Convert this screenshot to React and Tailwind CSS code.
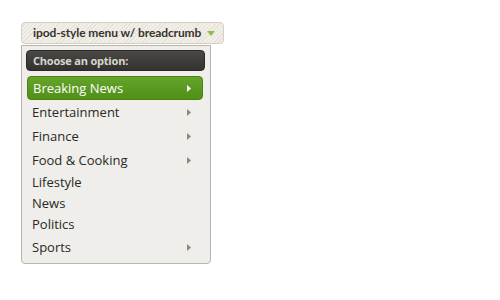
import React from "react";

const items = [
  { label: "Breaking News", arrow: true, active: true },
  { label: "Entertainment", arrow: true },
  { label: "Finance", arrow: true },
  { label: "Food & Cooking", arrow: true },
  { label: "Lifestyle" },
  { label: "News" },
  { label: "Politics" },
  { label: "Sports", arrow: true },
];

function Arrow({ color }) {
  return (
    <svg width="4" height="7" viewBox="0 0 4 7" className="block">
      <path d="M0 0 L4 3.5 L0 7 Z" fill={color} />
    </svg>
  );
}

export default function App() {
  return (
    <div className="w-[500px] h-[300px] bg-white relative font-[family-name:'Open_Sans','Noto_Sans',sans-serif]">
      <div className="pt-[22px] pl-[21px]">
        <div className="w-[203px] h-[22px] flex items-center justify-between pl-[11px] pr-[8px] rounded-[4px] border border-[#d4d0c4] bg-[#eeebe3] bg-[repeating-linear-gradient(135deg,#f2efe8_0px,#f2efe8_2px,#e6e2d8_2px,#e6e2d8_3px)]">
          <span className="text-[12px] font-bold text-[#36342e] leading-none tracking-[-0.1px] whitespace-nowrap font-[family-name:Lato,sans-serif]">
            ipod-style menu w/ breadcrumb
          </span>
          <svg width="8" height="5" viewBox="0 0 8 5" className="block shrink-0">
            <path d="M0 0 L8 0 L4 5 Z" fill="#8dbb50" />
          </svg>
        </div>
        <div className="w-[190px] mt-[1px] border border-[#b8b5ad] rounded-b-[4px] bg-[#efeeea] px-[4px] pt-[4px] pb-[4px]">
          <div className="h-[21px] rounded-[4px] bg-[linear-gradient(#4a4945,#33322e)] border border-[#2a2926] flex items-center pl-[6px] mr-[1px]">
            <span className="text-[11px] font-bold text-[#d8d6d0] leading-none tracking-[-0.2px] whitespace-nowrap">
              Choose an option:
            </span>
          </div>
          <div className="mt-[5px] flex flex-col">
            {items.map((it) =>
              it.active ? (
                <div
                  key={it.label}
                  className="h-[24px] ml-[1px] mr-[3px] rounded-[4px] border border-[#4a8014] bg-[linear-gradient(#65a42a,#519018)] flex items-center justify-between pl-[5px] pr-[11px]"
                >
                  <span className="text-[13px] text-white leading-none whitespace-nowrap">{it.label}</span>
                  <Arrow color="#ffffff" />
                </div>
              ) : (
                <div
                  key={it.label}
                  className={`${it.arrow ? "h-[24px]" : "h-[21px]"} flex items-center justify-between pl-[6px] pr-[15px]`}
                >
                  <span className="text-[13px] text-[#2a2925] leading-none whitespace-nowrap">{it.label}</span>
                  {it.arrow ? <Arrow color="#8a8880" /> : null}
                </div>
              )
            )}
          </div>
        </div>
      </div>
    </div>
  );
}
